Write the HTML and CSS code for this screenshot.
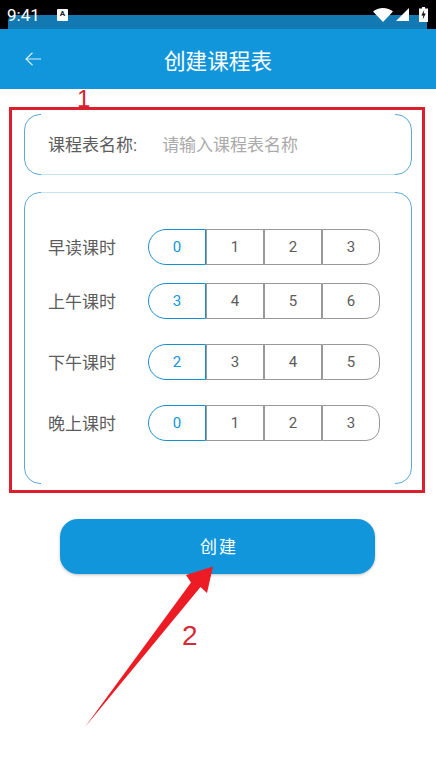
FILE: index.html
```html
<!DOCTYPE html>
<html lang="zh-CN">
<head>
    <meta charset="UTF-8">
    <meta name="viewport" content="width=device-width, initial-scale=1.0">
    <link rel="stylesheet" href="styles.css">
</head>
<body>
    <div class="status-bar">
        <span class="status-time">9:41</span>
        <span class="status-notice">A</span>
        <div class="status-icons">
            <svg class="wifi-icon" width="20" height="14" viewBox="0 0 20 14"><path d="M0 3.500C2.700 1.300 6.300 0 10 0s7.300 1.300 10 3.500L10 14z" fill="#fff"/></svg>
            <svg class="signal-icon" width="13" height="13" viewBox="0 0 13 13"><path d="M13 0v13H0z" fill="#fff"/></svg>
            <svg class="battery-icon" width="9" height="15" viewBox="0 0 9 15"><path d="M3 0h3v1.500h3V15H0V1.500h3z" fill="#fff"/><path d="M5.200 3 2.300 8.500h2l-.6 4 3-6h-2z" fill="#111"/></svg>
        </div>
    </div>

    <header class="app-header">
        <svg class="back-icon" width="16" height="14" viewBox="0 0 16 14"><path d="M7.500 0.800 1 7l6.500 6.200M1 7h15" fill="none" stroke="#d5ecfa" stroke-width="1.200"/></svg>
        <h1 class="app-title">创建课程表</h1>
    </header>

    <main class="content">
        <div class="mark-box">
            <span class="mark-one">1</span>
            <div class="card name-card">
                <span class="name-label">课程表名称:</span>
                <span class="name-input">请输入课程表名称</span>
            </div>
            <div class="card lessons-card">
                <div class="lesson-row">
                    <span class="lesson-label">早读课时</span>
                    <div class="segments">
                        <span class="segment active">0</span>
                        <span class="segment">1</span>
                        <span class="segment">2</span>
                        <span class="segment">3</span>
                    </div>
                </div>
                <div class="lesson-row tight">
                    <span class="lesson-label">上午课时</span>
                    <div class="segments">
                        <span class="segment active">3</span>
                        <span class="segment">4</span>
                        <span class="segment">5</span>
                        <span class="segment">6</span>
                    </div>
                </div>
                <div class="lesson-row">
                    <span class="lesson-label">下午课时</span>
                    <div class="segments">
                        <span class="segment active">2</span>
                        <span class="segment">3</span>
                        <span class="segment">4</span>
                        <span class="segment">5</span>
                    </div>
                </div>
                <div class="lesson-row">
                    <span class="lesson-label">晚上课时</span>
                    <div class="segments">
                        <span class="segment active">0</span>
                        <span class="segment">1</span>
                        <span class="segment">2</span>
                        <span class="segment">3</span>
                    </div>
                </div>
            </div>
        </div>

        <button class="create-button">创建</button>
    </main>

    <svg class="mark-arrow" width="436" height="775" viewBox="0 0 436 775"><path d="M213 566.500 186 575 191 582.500 85 727 200.500 587 207 593z" fill="#ed1c24"/></svg>
    <span class="mark-two">2</span>
</body>
</html>
```

FILE: styles.css
```css
body {
    margin: 0;
    width: 436px;
    height: 775px;
    position: relative;
    overflow: hidden;
    background-color: #fff;
    font-family: Roboto, "Noto Sans CJK SC", sans-serif;
    color: #5c5c5c;
}

.status-bar {
    position: relative;
    height: 29px;
    display: flex;
    align-items: center;
    padding: 0 8px 0 7px;
    box-sizing: border-box;
    background-color: #000;
    color: #fff;
}

.status-bar::before {
    content: "";
    position: absolute;
    left: 8px;
    right: 9px;
    top: 15px;
    bottom: 0;
    border-radius: 6px 6px 0 0;
    background-color: #1279b2;
}

.status-time {
    position: relative;
    width: 50px;
    font-size: 17px;
    line-height: 30px;
}

.status-notice {
    position: relative;
    width: 11px;
    height: 12px;
    border-radius: 1px;
    background-color: #fff;
    color: #123;
    font-size: 8px;
    font-weight: 700;
    line-height: 10px;
    text-align: center;
}

.status-icons {
    position: relative;
    margin-left: auto;
    display: flex;
    align-items: center;
}

.signal-icon {
    margin-left: 3px;
}

.battery-icon {
    margin-left: 10px;
}

.app-header {
    position: relative;
    height: 60px;
    display: flex;
    align-items: center;
    justify-content: center;
    background-color: #1296db;
}

.back-icon {
    position: absolute;
    left: 25px;
    top: 23px;
}

.app-title {
    margin: 0;
    font-size: 21.6px;
    font-weight: 400;
    color: #fff;
}

.content {
    padding: 18px 0 0 9px;
}

.mark-box {
    position: relative;
    width: 416px;
    height: 386px;
    box-sizing: border-box;
    border: 3px solid #dc1f2e;
    padding: 4px 10px 0 12px;
}

.mark-one {
    position: absolute;
    left: 65px;
    top: -23px;
    font-family: "Liberation Sans", sans-serif;
    font-size: 24px;
    line-height: 24px;
    color: #dc1f2e;
}

.card {
    position: relative;
    box-sizing: border-box;
    border: 1px solid #5aa9d6;
    border-radius: 16px;
}

/* top and bottom edges of the cards are much fainter than the sides */
.card::before,
.card::after {
    content: "";
    position: absolute;
    left: 16px;
    right: 16px;
    height: 1px;
}

.card::before {
    top: -1px;
}

.card::after {
    bottom: -1px;
}

.name-card {
    height: 61px;
    display: flex;
    align-items: center;
    padding: 0 0 2px 23px;
    font-size: 17px;
}

.name-card::before {
    background-color: #fff;
}

.name-card::after {
    background-color: #c5e3f0;
}

.name-input {
    margin-left: 25px;
    color: #aaa;
}

.lessons-card {
    height: 292px;
    margin-top: 17px;
    padding: 36px 0 0 23px;
}

.lessons-card::before {
    background-color: #c5e3f0;
}

.lessons-card::after {
    background-color: #fff;
}

.lesson-row {
    display: flex;
    align-items: center;
    margin-top: 25px;
}

.lesson-row:first-child {
    margin-top: 0;
}

.lesson-row.tight {
    margin-top: 18px;
}

.lesson-label {
    width: 100px;
    padding-bottom: 2px;
    font-size: 17px;
}

.segments {
    display: flex;
    width: 232px;
    height: 36px;
}

.segment {
    flex: 1;
    box-sizing: border-box;
    border: 1px solid #999;
    font-size: 15px;
    line-height: 34px;
    text-align: center;
}

.segment:last-child {
    border-radius: 0 14px 14px 0;
}

.segment.active {
    border-color: #1a8fd0;
    border-radius: 18px 0 0 18px;
    color: #1296db;
}

.create-button {
    display: block;
    width: 315px;
    height: 55px;
    margin: 26px 0 0 51px;
    padding: 0 0 3px 3px;
    border: none;
    border-radius: 18px;
    background-color: #1296db;
    box-shadow: 0 1px 3px rgba(0, 0, 0, 0.25);
    font-family: inherit;
    font-size: 17px;
    letter-spacing: 2px;
    color: #fff;
}

.mark-arrow {
    position: absolute;
    left: 0;
    top: 0;
}

.mark-two {
    position: absolute;
    left: 182px;
    top: 622px;
    font-family: "Liberation Sans", sans-serif;
    font-size: 28px;
    line-height: 28px;
    color: #d42a3a;
}
```
